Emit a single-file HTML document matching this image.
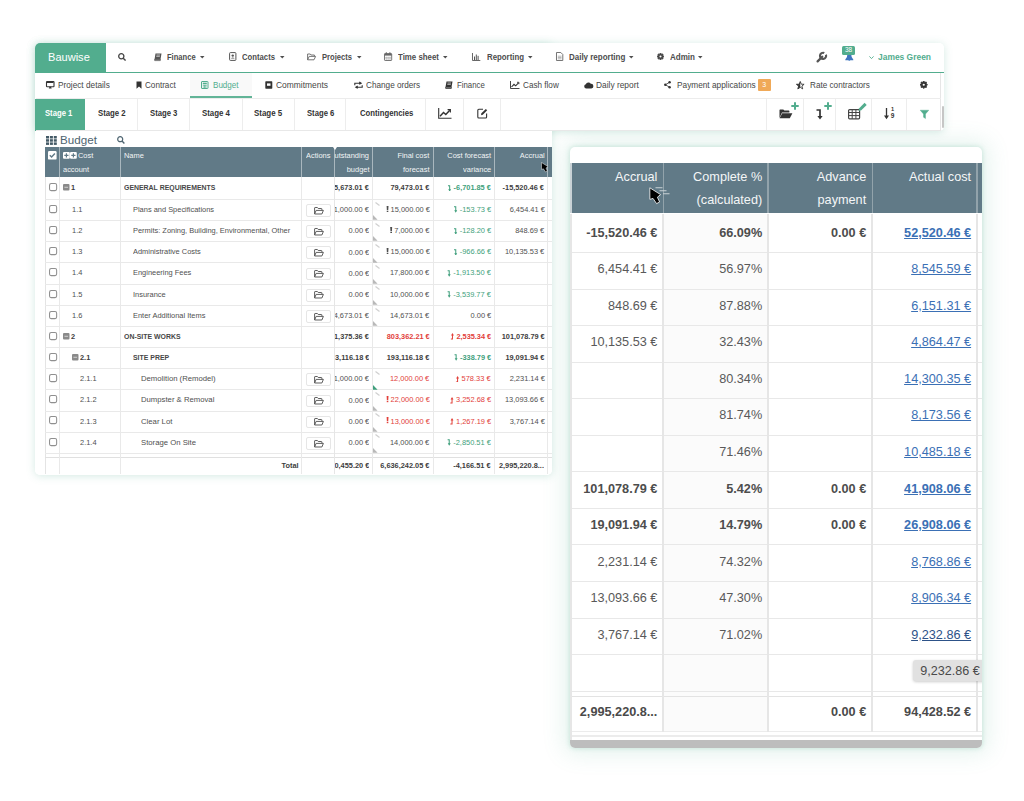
<!DOCTYPE html><html><head><meta charset="utf-8"><style>
html,body{margin:0;padding:0;width:1024px;height:801px;overflow:hidden;background:#fff;font-family:"Liberation Sans", sans-serif;}
body{position:relative;}
</style></head><body>
<div style="position:absolute;left:570.00px;top:147.20px;width:412.40px;height:601.00px;background:#fff;border-radius:5px;box-shadow:0 0 4px 1px rgba(82,173,142,0.2), 0 0 22px 6px rgba(82,173,142,0.15);"></div>
<div style="position:absolute;left:35.00px;top:42.50px;width:909.00px;height:88.00px;background:#fff;border-radius:5px;box-shadow:0 1px 8px rgba(82,173,142,0.25);"></div>
<div style="position:absolute;left:35.00px;top:42.50px;width:517.00px;height:432.00px;background:#fff;border-radius:5px;box-shadow:0 1px 8px rgba(82,173,142,0.25);"></div>
<div style="position:absolute;left:35.00px;top:42.50px;width:909.00px;height:88.00px;background:#fff;border-radius:5px 5px 5px 0;"></div>
<div style="position:absolute;left:35.00px;top:42.50px;width:517.00px;height:432.00px;background:#fff;border-radius:5px 0 5px 5px;"></div>
<div style="position:absolute;left:35.00px;top:42.50px;width:71.00px;height:30.00px;background:#52ad8e;border-top-left-radius:5px;"></div>
<div style="position:absolute;left:35.00px;top:71.80px;width:909.00px;height:1.60px;background:#52ad8e;"></div>
<div style="position:absolute;left:48.20px;top:49.52px;line-height:14.95px;font-size:11.5px;font-weight:400;color:#fff;white-space:nowrap;transform:scaleX(0.9616);transform-origin:left center;">Bauwise</div>
<svg style="position:absolute;left:117.50px;top:52.50px;overflow:visible;" width="8" height="8" viewBox="0 0 8 8"><circle cx="3.3" cy="3.3" r="2.6" fill="none" stroke="#444" stroke-width="1.3"/><line x1="5.2" y1="5.2" x2="7.6" y2="7.6" stroke="#444" stroke-width="1.4"/></svg>
<svg style="position:absolute;left:153.70px;top:52.60px;overflow:visible;" width="8" height="8" viewBox="0 0 8 8"><path d="M1.5 0.5 H7.5 L6.5 6.5 H0.5 Z" fill="#555"/><path d="M0.5 6.5 H6.5 L6.3 7.6 H0.7 Z" fill="none" stroke="#555" stroke-width="0.8"/><line x1="2.5" y1="2" x2="6" y2="2" stroke="#fff" stroke-width="0.6"/><line x1="2.3" y1="3.4" x2="5.8" y2="3.4" stroke="#fff" stroke-width="0.6"/></svg>
<div style="position:absolute;left:167.40px;top:52.28px;line-height:11.44px;font-size:8.8px;font-weight:700;color:#4d4d4d;white-space:nowrap;transform:scaleX(0.8602);transform-origin:left center;">Finance</div>
<svg style="position:absolute;left:200.00px;top:56.00px;overflow:visible;" width="4.5" height="3" viewBox="0 0 4.5 3"><path d="M0 0 L4.5 0 L2.25 2.6 Z" fill="#4d4d4d"/></svg>
<svg style="position:absolute;left:229.20px;top:52.20px;overflow:visible;" width="7.5" height="9" viewBox="0 0 7.5 9"><rect x="0.6" y="0.6" width="6.3" height="7.8" rx="0.8" fill="none" stroke="#555" stroke-width="1"/><circle cx="3.75" cy="3.6" r="1.2" fill="#555"/><path d="M1.9 6.6 Q3.75 4.5 5.6 6.6 Z" fill="#555"/></svg>
<div style="position:absolute;left:242.00px;top:52.28px;line-height:11.44px;font-size:8.8px;font-weight:700;color:#4d4d4d;white-space:nowrap;transform:scaleX(0.8767);transform-origin:left center;">Contacts</div>
<svg style="position:absolute;left:279.60px;top:56.00px;overflow:visible;" width="4.5" height="3" viewBox="0 0 4.5 3"><path d="M0 0 L4.5 0 L2.25 2.6 Z" fill="#4d4d4d"/></svg>
<svg style="position:absolute;left:307.30px;top:53.00px;overflow:visible;" width="9" height="7.5" viewBox="0 0 9 7.5"><path d="M0.6 6.8 V1 H3.2 L4 2 H7.4 V3.2 M0.6 6.8 L2.2 3.4 H8.6 L7 6.8 Z" fill="none" stroke="#666" stroke-width="0.9" stroke-linejoin="round"/></svg>
<div style="position:absolute;left:322.00px;top:52.28px;line-height:11.44px;font-size:8.8px;font-weight:700;color:#4d4d4d;white-space:nowrap;transform:scaleX(0.8641);transform-origin:left center;">Projects</div>
<svg style="position:absolute;left:356.50px;top:56.00px;overflow:visible;" width="4.5" height="3" viewBox="0 0 4.5 3"><path d="M0 0 L4.5 0 L2.25 2.6 Z" fill="#4d4d4d"/></svg>
<svg style="position:absolute;left:384.40px;top:52.20px;overflow:visible;" width="8.2" height="9" viewBox="0 0 8.2 9"><rect x="0.5" y="1.6" width="7.2" height="6.9" rx="0.6" fill="none" stroke="#666" stroke-width="0.9"/><rect x="0.5" y="1.6" width="7.2" height="2" fill="#666"/><line x1="2.3" y1="0.2" x2="2.3" y2="2.4" stroke="#666" stroke-width="1"/><line x1="5.9" y1="0.2" x2="5.9" y2="2.4" stroke="#666" stroke-width="1"/><path d="M2.2 4.6 V8 M4.1 4.6 V8 M6 4.6 V8 M0.8 5.9 H7.4" stroke="#999" stroke-width="0.6"/></svg>
<div style="position:absolute;left:398.00px;top:52.28px;line-height:11.44px;font-size:8.8px;font-weight:700;color:#4d4d4d;white-space:nowrap;transform:scaleX(0.8950);transform-origin:left center;">Time sheet</div>
<svg style="position:absolute;left:443.00px;top:56.00px;overflow:visible;" width="4.5" height="3" viewBox="0 0 4.5 3"><path d="M0 0 L4.5 0 L2.25 2.6 Z" fill="#4d4d4d"/></svg>
<svg style="position:absolute;left:472.30px;top:52.80px;overflow:visible;" width="8.3" height="8" viewBox="0 0 8.3 8"><path d="M0.5 0 V7.5 H8.3" fill="none" stroke="#555" stroke-width="0.9"/><rect x="2" y="3.5" width="1" height="3.5" fill="#555"/><rect x="3.8" y="1.5" width="1" height="5.5" fill="#555"/><rect x="5.6" y="2.8" width="1" height="4.2" fill="#555"/></svg>
<div style="position:absolute;left:487.00px;top:52.28px;line-height:11.44px;font-size:8.8px;font-weight:700;color:#4d4d4d;white-space:nowrap;transform:scaleX(0.8906);transform-origin:left center;">Reporting</div>
<svg style="position:absolute;left:528.00px;top:56.00px;overflow:visible;" width="4.5" height="3" viewBox="0 0 4.5 3"><path d="M0 0 L4.5 0 L2.25 2.6 Z" fill="#4d4d4d"/></svg>
<svg style="position:absolute;left:556.40px;top:52.20px;overflow:visible;" width="7.3" height="9" viewBox="0 0 7.3 9"><path d="M0.5 0.5 H4.8 L6.8 2.5 V8.5 H0.5 Z" fill="none" stroke="#666" stroke-width="0.9"/><path d="M1.8 4.2 H5.5 M1.8 5.5 H5.5 M1.8 6.8 H5.5" stroke="#888" stroke-width="0.6"/></svg>
<div style="position:absolute;left:568.75px;top:52.28px;line-height:11.44px;font-size:8.8px;font-weight:700;color:#4d4d4d;white-space:nowrap;transform:scaleX(0.9061);transform-origin:left center;">Daily reporting</div>
<svg style="position:absolute;left:629.00px;top:56.00px;overflow:visible;" width="4.5" height="3" viewBox="0 0 4.5 3"><path d="M0 0 L4.5 0 L2.25 2.6 Z" fill="#4d4d4d"/></svg>
<svg style="position:absolute;left:657.40px;top:53.20px;overflow:visible;" width="7" height="7" viewBox="0 0 7 7"><polygon points="7.00,3.50 5.83,4.46 5.97,5.97 4.46,5.83 3.50,7.00 2.54,5.83 1.03,5.97 1.17,4.46 0.00,3.50 1.17,2.54 1.03,1.03 2.54,1.17 3.50,0.00 4.46,1.17 5.97,1.03 5.83,2.54" fill="#444" stroke="#444" stroke-width="0.84" stroke-linejoin="round"/><circle cx="3.5" cy="3.5" r="1.05" fill="#fff"/></svg>
<div style="position:absolute;left:670.30px;top:52.28px;line-height:11.44px;font-size:8.8px;font-weight:700;color:#4d4d4d;white-space:nowrap;transform:scaleX(0.9132);transform-origin:left center;">Admin</div>
<svg style="position:absolute;left:698.40px;top:56.00px;overflow:visible;" width="4.5" height="3" viewBox="0 0 4.5 3"><path d="M0 0 L4.5 0 L2.25 2.6 Z" fill="#4d4d4d"/></svg>
<svg style="position:absolute;left:815.50px;top:52.00px;overflow:visible;" width="11" height="11" viewBox="0 0 11 11"><path d="M1.6 9.4 L6.2 4.8" stroke="#555" stroke-width="2.3" stroke-linecap="round"/><path d="M9.9 2.6 A3.1 3.1 0 1 1 8.3 1.0" fill="none" stroke="#555" stroke-width="2.1"/><path d="M8.6 2.3 L10.5 0.4" stroke="#fff" stroke-width="1.5"/></svg>
<svg style="position:absolute;left:844.60px;top:54.20px;overflow:visible;" width="8.6" height="7.6" viewBox="0 0 8.6 7.6"><path d="M2.3 0.5 H6.3 Q6.1 3.8 8.3 5.6 V6.2 H0.3 V5.6 Q2.5 3.8 2.3 0.5 Z" fill="#3f76c0"/><path d="M3.2 6.2 Q4.3 7.8 5.4 6.2 Z" fill="#3f76c0"/></svg>
<div style="position:absolute;left:841.90px;top:45.50px;width:13.00px;height:9.30px;background:#52ad8e;border-radius:1.5px;"></div>
<div style="position:absolute;left:648.40px;width:400px;text-align:center;top:45.98px;line-height:8.45px;font-size:6.5px;font-weight:400;color:#fff;white-space:nowrap;letter-spacing:-0.3px;">38</div>
<svg style="position:absolute;left:868.70px;top:56.00px;overflow:visible;" width="5" height="3.2" viewBox="0 0 5 3.2"><path d="M0.4 0.4 L2.5 2.6 L4.6 0.4" fill="none" stroke="#52ad8e" stroke-width="0.9"/></svg>
<div style="position:absolute;left:878.00px;top:52.28px;line-height:11.44px;font-size:8.8px;font-weight:700;color:#52ad8e;white-space:nowrap;transform:scaleX(0.9590);transform-origin:left center;">James Green</div>
<div style="position:absolute;left:189.70px;top:73.40px;width:62.70px;height:23.60px;background:#f9f9f9;"></div>
<div style="position:absolute;left:189.70px;top:96.40px;width:62.70px;height:1.50px;background:#62b497;"></div>
<div style="position:absolute;left:35.50px;top:97.80px;width:905.00px;height:0.80px;background:#ececec;"></div>
<div style="position:absolute;left:940.40px;top:73.40px;width:0.80px;height:25.00px;background:#e6e6e6;"></div>
<svg style="position:absolute;left:46.00px;top:81.00px;overflow:visible;" width="8.5" height="8" viewBox="0 0 8.5 8"><rect x="0.5" y="0.5" width="7.5" height="5.3" rx="0.6" fill="none" stroke="#333" stroke-width="1.1"/><path d="M2.8 7.6 H5.7 L5 5.8 H3.5 Z" fill="#333"/><rect x="1" y="1" width="6.5" height="1" fill="#333"/></svg>
<div style="position:absolute;left:57.90px;top:79.61px;line-height:11.18px;font-size:8.6px;font-weight:400;color:#464646;white-space:nowrap;transform:scaleX(0.9595);transform-origin:left center;">Project details</div>
<svg style="position:absolute;left:135.50px;top:80.80px;overflow:visible;" width="6" height="8" viewBox="0 0 6 8"><path d="M0.5 0.5 H5.5 V7.8 L3 5.6 L0.5 7.8 Z" fill="#333"/></svg>
<div style="position:absolute;left:144.90px;top:79.61px;line-height:11.18px;font-size:8.6px;font-weight:400;color:#464646;white-space:nowrap;transform:scaleX(0.9451);transform-origin:left center;">Contract</div>
<svg style="position:absolute;left:201.00px;top:80.80px;overflow:visible;" width="7.5" height="8" viewBox="0 0 7.5 8"><rect x="0.5" y="0.5" width="6.5" height="7" rx="0.5" fill="none" stroke="#52ad8e" stroke-width="1"/><rect x="1.8" y="1.7" width="4" height="1.5" fill="#52ad8e"/><path d="M1.8 4.3 H5.8 M1.8 6 H5.8 M3.8 4 V7" stroke="#52ad8e" stroke-width="0.8"/></svg>
<div style="position:absolute;left:213.00px;top:79.61px;line-height:11.18px;font-size:8.6px;font-weight:400;color:#52ad8e;white-space:nowrap;transform:scaleX(0.9394);transform-origin:left center;">Budget</div>
<svg style="position:absolute;left:265.00px;top:80.80px;overflow:visible;" width="7.5" height="8" viewBox="0 0 7.5 8"><rect x="0.3" y="0.3" width="7" height="7.4" rx="0.6" fill="#333"/><rect x="2" y="2.4" width="3.5" height="2.4" fill="#fff"/></svg>
<div style="position:absolute;left:276.00px;top:79.61px;line-height:11.18px;font-size:8.6px;font-weight:400;color:#464646;white-space:nowrap;transform:scaleX(0.9808);transform-origin:left center;">Commitments</div>
<svg style="position:absolute;left:354.00px;top:81.50px;overflow:visible;" width="9" height="6.5" viewBox="0 0 9 6.5"><path d="M0.8 3.2 V1.2 H6.8 M5.3 0 L7.2 1.2 L5.3 2.4" fill="none" stroke="#333" stroke-width="1.1"/><path d="M8.2 3.2 V5.2 H2.2 M3.7 4 L1.8 5.2 L3.7 6.4" fill="none" stroke="#333" stroke-width="1.1"/></svg>
<div style="position:absolute;left:365.80px;top:79.61px;line-height:11.18px;font-size:8.6px;font-weight:400;color:#464646;white-space:nowrap;transform:scaleX(0.9532);transform-origin:left center;">Change orders</div>
<svg style="position:absolute;left:445.00px;top:81.00px;overflow:visible;" width="8" height="8" viewBox="0 0 8 8"><path d="M1.5 0.5 H7.5 L6.5 6.3 H0.5 Z" fill="#333"/><path d="M0.5 6.3 H6.5 L6.3 7.5 H0.7 Z" fill="none" stroke="#333" stroke-width="0.8"/><line x1="2.5" y1="2" x2="6" y2="2" stroke="#fff" stroke-width="0.6"/><line x1="2.3" y1="3.4" x2="5.8" y2="3.4" stroke="#fff" stroke-width="0.6"/></svg>
<div style="position:absolute;left:456.60px;top:79.61px;line-height:11.18px;font-size:8.6px;font-weight:400;color:#464646;white-space:nowrap;transform:scaleX(0.9091);transform-origin:left center;">Finance</div>
<svg style="position:absolute;left:510.00px;top:81.00px;overflow:visible;" width="9.5" height="8" viewBox="0 0 9.5 8"><path d="M0.5 0 V7.5 H9.5" fill="none" stroke="#333" stroke-width="0.9"/><path d="M1.5 6 L4 3.3 L5.7 4.8 L8.5 1.8" fill="none" stroke="#333" stroke-width="1.1"/><path d="M7 1.3 H8.9 V3.2" fill="none" stroke="#333" stroke-width="0.9"/></svg>
<div style="position:absolute;left:522.50px;top:79.61px;line-height:11.18px;font-size:8.6px;font-weight:400;color:#464646;white-space:nowrap;transform:scaleX(0.9487);transform-origin:left center;">Cash flow</div>
<svg style="position:absolute;left:583.50px;top:81.50px;overflow:visible;" width="9.5" height="7" viewBox="0 0 9.5 7"><path d="M2.2 6.5 A2.2 2.2 0 0 1 1.8 2.2 A2.8 2.8 0 0 1 6.8 1.8 A2.3 2.3 0 0 1 7.3 6.5 Z" fill="#333"/></svg>
<div style="position:absolute;left:595.80px;top:79.61px;line-height:11.18px;font-size:8.6px;font-weight:400;color:#464646;white-space:nowrap;transform:scaleX(0.9738);transform-origin:left center;">Daily report</div>
<svg style="position:absolute;left:664.40px;top:81.20px;overflow:visible;" width="6.8" height="7.5" viewBox="0 0 6.8 7.5"><circle cx="5.6" cy="1.3" r="1.2" fill="#333"/><circle cx="1.3" cy="3.75" r="1.2" fill="#333"/><circle cx="5.6" cy="6.2" r="1.2" fill="#333"/><path d="M5.6 1.3 L1.3 3.75 L5.6 6.2" fill="none" stroke="#333" stroke-width="0.8"/></svg>
<div style="position:absolute;left:676.80px;top:79.61px;line-height:11.18px;font-size:8.6px;font-weight:400;color:#464646;white-space:nowrap;transform:scaleX(0.9634);transform-origin:left center;">Payment applications</div>
<div style="position:absolute;left:757.60px;top:78.80px;width:13.00px;height:12.00px;background:#f0a958;border-radius:1px;"></div>
<div style="position:absolute;left:564.10px;width:400px;text-align:center;top:80.25px;line-height:9.1px;font-size:7px;font-weight:400;color:#fff;white-space:nowrap;">3</div>
<svg style="position:absolute;left:796.40px;top:80.50px;overflow:visible;" width="8.5" height="8.5" viewBox="0 0 8.5 8.5"><path d="M4.25 0.5 L5.3 3.2 L8.1 3.3 L5.9 5.1 L6.7 7.9 L4.25 6.3 L1.8 7.9 L2.6 5.1 L0.4 3.3 L3.2 3.2 Z" fill="none" stroke="#333" stroke-width="0.9" stroke-linejoin="round"/><path d="M4.25 0.5 L3.2 3.2 L0.4 3.3 L2.6 5.1 L1.8 7.9 L4.25 6.3 Z" fill="#333"/></svg>
<div style="position:absolute;left:809.70px;top:79.61px;line-height:11.18px;font-size:8.6px;font-weight:400;color:#464646;white-space:nowrap;transform:scaleX(0.9499);transform-origin:left center;">Rate contractors</div>
<svg style="position:absolute;left:919.80px;top:81.20px;overflow:visible;" width="7.5" height="7.5" viewBox="0 0 7.5 7.5"><polygon points="7.50,3.75 6.24,4.78 6.40,6.40 4.78,6.24 3.75,7.50 2.72,6.24 1.10,6.40 1.26,4.78 0.00,3.75 1.26,2.72 1.10,1.10 2.72,1.26 3.75,0.00 4.78,1.26 6.40,1.10 6.24,2.72" fill="#333" stroke="#333" stroke-width="0.90" stroke-linejoin="round"/><circle cx="3.75" cy="3.75" r="1.12" fill="#fff"/></svg>
<div style="position:absolute;left:35.00px;top:98.50px;width:50.00px;height:32.00px;background:#52ad8e;"></div>
<div style="position:absolute;left:35.50px;top:130.20px;width:905.00px;height:0.90px;background:#e8e8e8;"></div>
<div style="position:absolute;left:137.00px;top:98.60px;width:1.00px;height:31.60px;background:#ededed;"></div>
<div style="position:absolute;left:189.00px;top:98.60px;width:1.00px;height:31.60px;background:#ededed;"></div>
<div style="position:absolute;left:242.00px;top:98.60px;width:1.00px;height:31.60px;background:#ededed;"></div>
<div style="position:absolute;left:294.00px;top:98.60px;width:1.00px;height:31.60px;background:#ededed;"></div>
<div style="position:absolute;left:345.00px;top:98.60px;width:1.00px;height:31.60px;background:#ededed;"></div>
<div style="position:absolute;left:425.00px;top:98.60px;width:1.00px;height:31.60px;background:#ededed;"></div>
<div style="position:absolute;left:463.00px;top:98.60px;width:1.00px;height:31.60px;background:#ededed;"></div>
<div style="position:absolute;left:500.00px;top:98.60px;width:1.00px;height:31.60px;background:#ededed;"></div>
<div style="position:absolute;left:766.00px;top:98.60px;width:1.00px;height:31.60px;background:#ededed;"></div>
<div style="position:absolute;left:803.00px;top:98.60px;width:1.00px;height:31.60px;background:#ededed;"></div>
<div style="position:absolute;left:835.00px;top:98.60px;width:1.00px;height:31.60px;background:#ededed;"></div>
<div style="position:absolute;left:871.00px;top:98.60px;width:1.00px;height:31.60px;background:#ededed;"></div>
<div style="position:absolute;left:906.00px;top:98.60px;width:1.00px;height:31.60px;background:#ededed;"></div>
<div style="position:absolute;left:940.40px;top:98.60px;width:0.80px;height:31.60px;background:#e6e6e6;"></div>
<div style="position:absolute;left:942.20px;top:106.00px;width:2.20px;height:22.00px;background:#c6c6c6;border-radius:1px;"></div>
<div style="position:absolute;left:45.00px;top:108.41px;line-height:11.18px;font-size:8.6px;font-weight:700;color:#fff;white-space:nowrap;transform:scaleX(0.8928);transform-origin:left center;">Stage 1</div>
<div style="position:absolute;left:97.60px;top:108.41px;line-height:11.18px;font-size:8.6px;font-weight:700;color:#333;white-space:nowrap;transform:scaleX(0.9059);transform-origin:left center;">Stage 2</div>
<div style="position:absolute;left:149.90px;top:108.41px;line-height:11.18px;font-size:8.6px;font-weight:700;color:#333;white-space:nowrap;transform:scaleX(0.8961);transform-origin:left center;">Stage 3</div>
<div style="position:absolute;left:202.00px;top:108.41px;line-height:11.18px;font-size:8.6px;font-weight:700;color:#333;white-space:nowrap;transform:scaleX(0.9157);transform-origin:left center;">Stage 4</div>
<div style="position:absolute;left:254.20px;top:108.41px;line-height:11.18px;font-size:8.6px;font-weight:700;color:#333;white-space:nowrap;transform:scaleX(0.9222);transform-origin:left center;">Stage 5</div>
<div style="position:absolute;left:307.00px;top:108.41px;line-height:11.18px;font-size:8.6px;font-weight:700;color:#333;white-space:nowrap;transform:scaleX(0.8928);transform-origin:left center;">Stage 6</div>
<div style="position:absolute;left:359.50px;top:108.41px;line-height:11.18px;font-size:8.6px;font-weight:700;color:#333;white-space:nowrap;transform:scaleX(0.9001);transform-origin:left center;">Contingencies</div>
<svg style="position:absolute;left:438.00px;top:108.00px;overflow:visible;" width="13.5" height="11" viewBox="0 0 13.5 11"><path d="M0.7 0 V10.3 H13.5" fill="none" stroke="#333" stroke-width="1.1"/><path d="M2 8.2 L5.5 4.5 L7.8 6.5 L11.8 2.2" fill="none" stroke="#333" stroke-width="1.5"/><path d="M9.6 1.6 H12.4 V4.4" fill="none" stroke="#333" stroke-width="1.1"/></svg>
<svg style="position:absolute;left:476.50px;top:107.50px;overflow:visible;" width="11" height="11" viewBox="0 0 11 11"><path d="M6 1.2 H1.8 Q0.8 1.2 0.8 2.2 V9 Q0.8 10 1.8 10 H8.6 Q9.6 10 9.6 9 V5.5" fill="none" stroke="#333" stroke-width="1.1"/><path d="M4 7.2 L4.4 5.3 L8.8 0.9 L10.2 2.3 L5.8 6.7 Z" fill="#333"/></svg>
<svg style="position:absolute;left:779.00px;top:109.00px;overflow:visible;" width="14" height="9.5" viewBox="0 0 14 9.5"><path d="M0.5 9 V1 Q0.5 0.4 1.1 0.4 H4.3 L5.4 1.6 H9.8 Q10.4 1.6 10.4 2.2 V3.6 H3 L0.5 9 Z" fill="#333"/><path d="M0.6 9.2 L3.2 4.3 H13.4 L10.8 9.2 Z" fill="#333"/></svg>
<svg style="position:absolute;left:791.00px;top:102.00px;overflow:visible;" width="8" height="8" viewBox="0 0 8 8"><path d="M4 0.3 V7.7 M0.3 4 H7.7" stroke="#52ad8e" stroke-width="2"/></svg>
<svg style="position:absolute;left:816.00px;top:108.50px;overflow:visible;" width="8" height="10.5" viewBox="0 0 8 10.5"><path d="M0.5 1 H4 V8.5" fill="none" stroke="#333" stroke-width="1.7"/><path d="M1.4 7 L4 10.4 L6.6 7 Z" fill="#333"/></svg>
<svg style="position:absolute;left:823.50px;top:101.80px;overflow:visible;" width="8" height="8" viewBox="0 0 8 8"><path d="M4 0.3 V7.7 M0.3 4 H7.7" stroke="#52ad8e" stroke-width="2"/></svg>
<svg style="position:absolute;left:847.50px;top:108.50px;overflow:visible;" width="12.5" height="10.5" viewBox="0 0 12.5 10.5"><rect x="0.6" y="0.6" width="11" height="9.2" rx="1" fill="none" stroke="#444" stroke-width="1.2"/><path d="M0.6 3.5 H11.6 M0.6 6.6 H11.6 M4.2 0.6 V9.8 M7.9 0.6 V9.8" stroke="#444" stroke-width="1"/></svg>
<svg style="position:absolute;left:857.50px;top:101.50px;overflow:visible;" width="9.5" height="9.5" viewBox="0 0 9.5 9.5"><path d="M0.6 8.9 L1.2 6.2 L6.6 0.8 L8.7 2.9 L3.3 8.3 Z" fill="#52ad8e"/></svg>
<svg style="position:absolute;left:883.50px;top:107.80px;overflow:visible;" width="5" height="11.5" viewBox="0 0 5 11.5"><path d="M2.5 0 V9.5" stroke="#333" stroke-width="1.3"/><path d="M0 7.5 L2.5 11.2 L5 7.5 Z" fill="#333"/></svg>
<div style="position:absolute;left:692.60px;width:400px;text-align:center;top:105.66px;line-height:7.28px;font-size:5.6px;font-weight:700;color:#333;white-space:nowrap;">1</div>
<div style="position:absolute;left:692.60px;width:400px;text-align:center;top:111.98px;line-height:8.45px;font-size:6.5px;font-weight:700;color:#333;white-space:nowrap;">9</div>
<svg style="position:absolute;left:919.50px;top:109.50px;overflow:visible;" width="9" height="8.8" viewBox="0 0 9 8.8"><path d="M0.2 0.2 H8.8 L5.5 4 V8.6 L3.5 7.2 V4 Z" fill="#52ad8e" stroke="#52ad8e" stroke-width="0.4" stroke-linejoin="round"/></svg>
<svg style="position:absolute;left:46.00px;top:135.50px;overflow:visible;" width="11" height="9" viewBox="0 0 11 9"><g fill="#445a66"><rect x="0.0" y="0.0" width="3" height="2.5"/><rect x="0.0" y="3.2" width="3" height="2.5"/><rect x="0.0" y="6.4" width="3" height="2.5"/><rect x="3.9" y="0.0" width="3" height="2.5"/><rect x="3.9" y="3.2" width="3" height="2.5"/><rect x="3.9" y="6.4" width="3" height="2.5"/><rect x="7.8" y="0.0" width="3" height="2.5"/><rect x="7.8" y="3.2" width="3" height="2.5"/><rect x="7.8" y="6.4" width="3" height="2.5"/></g></svg>
<div style="position:absolute;left:60.00px;top:132.26px;line-height:15.08px;font-size:11.6px;font-weight:400;color:#4d6470;white-space:nowrap;letter-spacing:0.05px;">Budget</div>
<svg style="position:absolute;left:117.00px;top:136.00px;overflow:visible;" width="8" height="8" viewBox="0 0 8 8"><circle cx="3.2" cy="3.2" r="2.5" fill="none" stroke="#4d6470" stroke-width="1.2"/><line x1="5" y1="5" x2="7.4" y2="7.4" stroke="#4d6470" stroke-width="1.4"/></svg>
<div style="position:absolute;left:45.30px;top:147.00px;width:506.70px;height:29.80px;background:#617a87;"></div>
<div style="position:absolute;left:58.90px;top:147.00px;width:1.00px;height:29.80px;background:#a9b7be;"></div>
<div style="position:absolute;left:119.90px;top:147.00px;width:1.00px;height:29.80px;background:#a9b7be;"></div>
<div style="position:absolute;left:301.10px;top:147.00px;width:1.00px;height:29.80px;background:#a9b7be;"></div>
<div style="position:absolute;left:334.20px;top:147.00px;width:1.00px;height:29.80px;background:#a9b7be;"></div>
<div style="position:absolute;left:372.10px;top:147.00px;width:1.00px;height:29.80px;background:#a9b7be;"></div>
<div style="position:absolute;left:432.90px;top:147.00px;width:1.00px;height:29.80px;background:#a9b7be;"></div>
<div style="position:absolute;left:493.90px;top:147.00px;width:1.00px;height:29.80px;background:#a9b7be;"></div>
<div style="position:absolute;left:547.00px;top:147.00px;width:1.00px;height:29.80px;background:#a9b7be;"></div>
<div style="position:absolute;left:44.70px;top:176.80px;width:0.90px;height:297.70px;background:#e4e4e4;"></div>
<div style="position:absolute;left:45.30px;top:199.00px;width:506.70px;height:1.00px;background:#e9e9e9;"></div>
<div style="position:absolute;left:45.30px;top:220.00px;width:506.70px;height:1.00px;background:#e9e9e9;"></div>
<div style="position:absolute;left:45.30px;top:241.00px;width:506.70px;height:1.00px;background:#e9e9e9;"></div>
<div style="position:absolute;left:45.30px;top:262.00px;width:506.70px;height:1.00px;background:#e9e9e9;"></div>
<div style="position:absolute;left:45.30px;top:284.00px;width:506.70px;height:1.00px;background:#e9e9e9;"></div>
<div style="position:absolute;left:45.30px;top:305.00px;width:506.70px;height:1.00px;background:#e9e9e9;"></div>
<div style="position:absolute;left:45.30px;top:326.00px;width:506.70px;height:1.00px;background:#e9e9e9;"></div>
<div style="position:absolute;left:45.30px;top:347.00px;width:506.70px;height:1.00px;background:#e9e9e9;"></div>
<div style="position:absolute;left:45.30px;top:368.00px;width:506.70px;height:1.00px;background:#e9e9e9;"></div>
<div style="position:absolute;left:45.30px;top:389.00px;width:506.70px;height:1.00px;background:#e9e9e9;"></div>
<div style="position:absolute;left:45.30px;top:411.00px;width:506.70px;height:1.00px;background:#e9e9e9;"></div>
<div style="position:absolute;left:45.30px;top:432.00px;width:506.70px;height:1.00px;background:#e9e9e9;"></div>
<div style="position:absolute;left:45.30px;top:453.00px;width:506.70px;height:1.00px;background:#e9e9e9;"></div>
<div style="position:absolute;left:45.30px;top:456.80px;width:506.70px;height:1.00px;background:#e0e0e0;"></div>
<div style="position:absolute;left:59.00px;top:176.80px;width:1.00px;height:297.70px;background:#e9e9e9;"></div>
<div style="position:absolute;left:120.00px;top:176.80px;width:1.00px;height:297.70px;background:#e9e9e9;"></div>
<div style="position:absolute;left:301.00px;top:176.80px;width:1.00px;height:297.70px;background:#e9e9e9;"></div>
<div style="position:absolute;left:372.00px;top:176.80px;width:1.00px;height:297.70px;background:#e9e9e9;"></div>
<div style="position:absolute;left:433.00px;top:176.80px;width:1.00px;height:297.70px;background:#e9e9e9;"></div>
<div style="position:absolute;left:494.00px;top:176.80px;width:1.00px;height:297.70px;background:#e9e9e9;"></div>
<div style="position:absolute;left:547.00px;top:176.80px;width:1.00px;height:297.70px;background:#e9e9e9;"></div>
<div style="position:absolute;left:334.00px;top:176.80px;width:1.40px;height:297.70px;background:#e6e6e6;"></div>
<svg style="position:absolute;left:48.20px;top:151.10px;overflow:visible;" width="8.4" height="8.4" viewBox="0 0 8.4 8.4"><rect x="0" y="0" width="8.6" height="8.6" rx="1.2" fill="#fff"/><path d="M1.8 4.3 L3.6 6.1 L6.9 2.5" fill="none" stroke="#617a87" stroke-width="1.4"/></svg>
<svg style="position:absolute;left:62.80px;top:152.00px;overflow:visible;" width="6.8" height="6.8" viewBox="0 0 6.8 6.8"><rect x="0" y="0" width="6.8" height="6.8" rx="1" fill="#fff"/><path d="M3.4 1.3 V5.5 M1.3 3.4 H5.5" stroke="#617a87" stroke-width="1.2"/></svg>
<svg style="position:absolute;left:69.90px;top:152.00px;overflow:visible;" width="6.8" height="6.8" viewBox="0 0 6.8 6.8"><rect x="0" y="0" width="6.8" height="6.8" rx="1" fill="#fff"/><path d="M3.4 1.3 V5.5 M1.3 3.4 H5.5" stroke="#617a87" stroke-width="1.2"/></svg>
<div style="position:absolute;left:78.30px;top:151.10px;line-height:10.4px;font-size:8.0px;font-weight:400;color:#f2f5f6;white-space:nowrap;transform:scaleX(0.93);transform-origin:left center;">Cost</div>
<div style="position:absolute;left:62.80px;top:165.40px;line-height:10.4px;font-size:8.0px;font-weight:400;color:#f2f5f6;white-space:nowrap;transform:scaleX(0.93);transform-origin:left center;">account</div>
<div style="position:absolute;left:123.80px;top:151.10px;line-height:10.4px;font-size:8.0px;font-weight:400;color:#f2f5f6;white-space:nowrap;transform:scaleX(0.93);transform-origin:left center;">Name</div>
<div style="position:absolute;left:305.80px;top:151.10px;line-height:10.4px;font-size:8.0px;font-weight:400;color:#f2f5f6;white-space:nowrap;transform:scaleX(0.93);transform-origin:left center;">Actions</div>
<div style="position:absolute;right:654.90px;top:151.10px;line-height:10.4px;font-size:8.0px;font-weight:400;color:#f2f5f6;white-space:nowrap;transform:scaleX(0.93);transform-origin:right center;">utstanding</div>
<div style="position:absolute;right:654.90px;top:165.40px;line-height:10.4px;font-size:8.0px;font-weight:400;color:#f2f5f6;white-space:nowrap;transform:scaleX(0.93);transform-origin:right center;">budget</div>
<div style="position:absolute;right:594.30px;top:151.10px;line-height:10.4px;font-size:8.0px;font-weight:400;color:#f2f5f6;white-space:nowrap;transform:scaleX(0.93);transform-origin:right center;">Final cost</div>
<div style="position:absolute;right:594.30px;top:165.40px;line-height:10.4px;font-size:8.0px;font-weight:400;color:#f2f5f6;white-space:nowrap;transform:scaleX(0.93);transform-origin:right center;">forecast</div>
<div style="position:absolute;right:533.10px;top:151.10px;line-height:10.4px;font-size:8.0px;font-weight:400;color:#f2f5f6;white-space:nowrap;transform:scaleX(0.93);transform-origin:right center;">Cost forecast</div>
<div style="position:absolute;right:533.10px;top:165.40px;line-height:10.4px;font-size:8.0px;font-weight:400;color:#f2f5f6;white-space:nowrap;transform:scaleX(0.93);transform-origin:right center;">variance</div>
<div style="position:absolute;right:479.60px;top:151.10px;line-height:10.4px;font-size:8.0px;font-weight:400;color:#f2f5f6;white-space:nowrap;transform:scaleX(0.93);transform-origin:right center;">Accrual</div>
<svg style="position:absolute;left:332.80px;top:147.00px;overflow:visible;" width="4" height="3" viewBox="0 0 4 3"><path d="M0 0 H4 L2 3 Z" fill="#fff"/></svg>
<svg style="position:absolute;left:49.20px;top:183.05px;overflow:visible;" width="8.2" height="8.2" viewBox="0 0 8.2 8.2"><rect x="0.55" y="0.55" width="7.1" height="7.1" rx="1.6" fill="#fff" stroke="#8f8f8f" stroke-width="1.05"/></svg>
<svg style="position:absolute;left:63.40px;top:184.15px;overflow:visible;" width="6.5" height="6.4" viewBox="0 0 6.5 6.4"><rect x="0" y="0" width="6.5" height="6.4" rx="1" fill="#8a8a8a"/><rect x="1.4" y="2.8" width="3.7" height="0.9" fill="#d8d8d8"/></svg>
<div style="position:absolute;left:71.00px;top:183.15px;line-height:10.4px;font-size:8.0px;font-weight:700;color:#3d3d3d;white-space:nowrap;transform:scaleX(0.92);transform-origin:left center;">1</div>
<div style="position:absolute;left:124.30px;top:183.28px;line-height:10.14px;font-size:7.8px;font-weight:700;color:#474747;white-space:nowrap;transform:scaleX(0.888);transform-origin:left center;">GENERAL REQUIREMENTS</div>
<div style="position:absolute;left:335.4px;top:182.35px;width:33.70px;height:12px;overflow:hidden;"><div style="position:absolute;right:0;top:0;line-height:12px;font-size:8.0px;font-weight:700;color:#3d3d3d;white-space:nowrap;transform:scaleX(0.92);transform-origin:right center;">5,673.01 €</div></div>
<div style="position:absolute;right:594.30px;top:183.15px;line-height:10.4px;font-size:8.0px;font-weight:700;color:#3d3d3d;white-space:nowrap;transform:scaleX(0.92);transform-origin:right center;">79,473.01 €</div>
<div style="position:absolute;right:533.10px;top:183.15px;line-height:10.4px;font-size:8.0px;font-weight:700;color:#3f9f7c;white-space:nowrap;transform:scaleX(0.92);transform-origin:right center;"><svg width="4.2" height="6.8" viewBox="0 0 4.2 6.8" style="vertical-align:-1.2px;margin-right:2.2px"><path d="M0.2 0.8 H2.1 V5" fill="none" stroke="#3f9f7c" stroke-width="1.1"/><path d="M0.5 4.2 L2.1 6.7 L3.7 4.2 Z" fill="#3f9f7c"/></svg>-6,701.85 €</div>
<div style="position:absolute;right:479.60px;top:183.15px;line-height:10.4px;font-size:8.0px;font-weight:700;color:#3d3d3d;white-space:nowrap;transform:scaleX(0.92);transform-origin:right center;">-15,520.46 €</div>
<svg style="position:absolute;left:49.20px;top:204.88px;overflow:visible;" width="8.2" height="8.2" viewBox="0 0 8.2 8.2"><rect x="0.55" y="0.55" width="7.1" height="7.1" rx="1.6" fill="#fff" stroke="#8f8f8f" stroke-width="1.05"/></svg>
<div style="position:absolute;left:72.00px;top:204.98px;line-height:10.4px;font-size:8.0px;font-weight:400;color:#4f4f4f;white-space:nowrap;transform:scaleX(0.93);transform-origin:left center;">1.1</div>
<div style="position:absolute;left:132.60px;top:204.98px;line-height:10.4px;font-size:8.0px;font-weight:400;color:#4f4f4f;white-space:nowrap;transform:scaleX(0.93);transform-origin:left center;">Plans and Specifications</div>
<div style="position:absolute;left:306.40px;top:204.08px;width:24.60px;height:12.80px;background:#fff;border:0.8px solid #e6e6e6;border-radius:2px;box-sizing:border-box;"></div>
<svg style="position:absolute;left:313.50px;top:206.78px;overflow:visible;" width="10" height="7.8" viewBox="0 0 10 7.8"><path d="M0.6 7 V1 Q0.6 0.5 1.1 0.5 H3.4 L4.2 1.5 H7.4 Q7.9 1.5 7.9 2 V3.2 M0.6 7 L2.1 3.4 H9.4 L7.9 7 Z" fill="none" stroke="#555" stroke-width="0.95" stroke-linejoin="round"/></svg>
<div style="position:absolute;left:335.4px;top:204.18px;width:33.70px;height:12px;overflow:hidden;"><div style="position:absolute;right:0;top:0;line-height:12px;font-size:8.0px;font-weight:400;color:#4f4f4f;white-space:nowrap;transform:scaleX(0.93);transform-origin:right center;">1,000.00 €</div></div>
<svg style="position:absolute;left:374.50px;top:201.70px;overflow:visible;" width="5" height="4" viewBox="0 0 5 4"><path d="M0.5 0.5 L4.5 3.5" stroke="#d0d0d0" stroke-width="1.3"/></svg>
<svg style="position:absolute;left:373.20px;top:215.26px;overflow:visible;" width="5" height="5" viewBox="0 0 5 5"><path d="M0 0 L4.6 4.8 H0 Z" fill="#b8b8b8"/></svg>
<div style="position:absolute;right:594.30px;top:204.98px;line-height:10.4px;font-size:8.0px;font-weight:400;color:#4f4f4f;white-space:nowrap;transform:scaleX(0.93);transform-origin:right center;"><svg width="2.6" height="6.2" viewBox="0 0 2.6 6.2" style="vertical-align:-0.1px;margin-right:2.0px"><path d="M0.2 0 H2.4 L2.1 4.1 H0.5 Z" fill="#4f4f4f"/><rect x="0.4" y="4.7" width="1.8" height="1.5" fill="#4f4f4f"/></svg>15,000.00 €</div>
<div style="position:absolute;right:533.10px;top:204.98px;line-height:10.4px;font-size:8.0px;font-weight:400;color:#3f9f7c;white-space:nowrap;transform:scaleX(0.93);transform-origin:right center;"><svg width="4.2" height="6.8" viewBox="0 0 4.2 6.8" style="vertical-align:-1.2px;margin-right:2.2px"><path d="M0.2 0.8 H2.1 V5" fill="none" stroke="#3f9f7c" stroke-width="1.1"/><path d="M0.5 4.2 L2.1 6.7 L3.7 4.2 Z" fill="#3f9f7c"/></svg>-153.73 €</div>
<div style="position:absolute;right:479.60px;top:204.98px;line-height:10.4px;font-size:8.0px;font-weight:400;color:#4f4f4f;white-space:nowrap;transform:scaleX(0.93);transform-origin:right center;">6,454.41 €</div>
<svg style="position:absolute;left:49.20px;top:226.04px;overflow:visible;" width="8.2" height="8.2" viewBox="0 0 8.2 8.2"><rect x="0.55" y="0.55" width="7.1" height="7.1" rx="1.6" fill="#fff" stroke="#8f8f8f" stroke-width="1.05"/></svg>
<div style="position:absolute;left:72.00px;top:226.14px;line-height:10.4px;font-size:8.0px;font-weight:400;color:#4f4f4f;white-space:nowrap;transform:scaleX(0.93);transform-origin:left center;">1.2</div>
<div style="position:absolute;left:132.60px;top:226.14px;line-height:10.4px;font-size:8.0px;font-weight:400;color:#4f4f4f;white-space:nowrap;transform:scaleX(0.93);transform-origin:left center;">Permits: Zoning, Building, Environmental, Other</div>
<div style="position:absolute;left:306.40px;top:225.24px;width:24.60px;height:12.80px;background:#fff;border:0.8px solid #e6e6e6;border-radius:2px;box-sizing:border-box;"></div>
<svg style="position:absolute;left:313.50px;top:227.94px;overflow:visible;" width="10" height="7.8" viewBox="0 0 10 7.8"><path d="M0.6 7 V1 Q0.6 0.5 1.1 0.5 H3.4 L4.2 1.5 H7.4 Q7.9 1.5 7.9 2 V3.2 M0.6 7 L2.1 3.4 H9.4 L7.9 7 Z" fill="none" stroke="#555" stroke-width="0.95" stroke-linejoin="round"/></svg>
<div style="position:absolute;left:335.4px;top:225.34px;width:33.70px;height:12px;overflow:hidden;"><div style="position:absolute;right:0;top:0;line-height:12px;font-size:8.0px;font-weight:400;color:#4f4f4f;white-space:nowrap;transform:scaleX(0.93);transform-origin:right center;">0.00 €</div></div>
<svg style="position:absolute;left:374.50px;top:222.86px;overflow:visible;" width="5" height="4" viewBox="0 0 5 4"><path d="M0.5 0.5 L4.5 3.5" stroke="#d0d0d0" stroke-width="1.3"/></svg>
<svg style="position:absolute;left:373.20px;top:236.42px;overflow:visible;" width="5" height="5" viewBox="0 0 5 5"><path d="M0 0 L4.6 4.8 H0 Z" fill="#b8b8b8"/></svg>
<div style="position:absolute;right:594.30px;top:226.14px;line-height:10.4px;font-size:8.0px;font-weight:400;color:#4f4f4f;white-space:nowrap;transform:scaleX(0.93);transform-origin:right center;"><svg width="2.6" height="6.2" viewBox="0 0 2.6 6.2" style="vertical-align:-0.1px;margin-right:2.0px"><path d="M0.2 0 H2.4 L2.1 4.1 H0.5 Z" fill="#4f4f4f"/><rect x="0.4" y="4.7" width="1.8" height="1.5" fill="#4f4f4f"/></svg>7,000.00 €</div>
<div style="position:absolute;right:533.10px;top:226.14px;line-height:10.4px;font-size:8.0px;font-weight:400;color:#3f9f7c;white-space:nowrap;transform:scaleX(0.93);transform-origin:right center;"><svg width="4.2" height="6.8" viewBox="0 0 4.2 6.8" style="vertical-align:-1.2px;margin-right:2.2px"><path d="M0.2 0.8 H2.1 V5" fill="none" stroke="#3f9f7c" stroke-width="1.1"/><path d="M0.5 4.2 L2.1 6.7 L3.7 4.2 Z" fill="#3f9f7c"/></svg>-128.20 €</div>
<div style="position:absolute;right:479.60px;top:226.14px;line-height:10.4px;font-size:8.0px;font-weight:400;color:#4f4f4f;white-space:nowrap;transform:scaleX(0.93);transform-origin:right center;">848.69 €</div>
<svg style="position:absolute;left:49.20px;top:247.20px;overflow:visible;" width="8.2" height="8.2" viewBox="0 0 8.2 8.2"><rect x="0.55" y="0.55" width="7.1" height="7.1" rx="1.6" fill="#fff" stroke="#8f8f8f" stroke-width="1.05"/></svg>
<div style="position:absolute;left:72.00px;top:247.30px;line-height:10.4px;font-size:8.0px;font-weight:400;color:#4f4f4f;white-space:nowrap;transform:scaleX(0.93);transform-origin:left center;">1.3</div>
<div style="position:absolute;left:132.60px;top:247.30px;line-height:10.4px;font-size:8.0px;font-weight:400;color:#4f4f4f;white-space:nowrap;transform:scaleX(0.93);transform-origin:left center;">Administrative Costs</div>
<div style="position:absolute;left:306.40px;top:246.40px;width:24.60px;height:12.80px;background:#fff;border:0.8px solid #e6e6e6;border-radius:2px;box-sizing:border-box;"></div>
<svg style="position:absolute;left:313.50px;top:249.10px;overflow:visible;" width="10" height="7.8" viewBox="0 0 10 7.8"><path d="M0.6 7 V1 Q0.6 0.5 1.1 0.5 H3.4 L4.2 1.5 H7.4 Q7.9 1.5 7.9 2 V3.2 M0.6 7 L2.1 3.4 H9.4 L7.9 7 Z" fill="none" stroke="#555" stroke-width="0.95" stroke-linejoin="round"/></svg>
<div style="position:absolute;left:335.4px;top:246.50px;width:33.70px;height:12px;overflow:hidden;"><div style="position:absolute;right:0;top:0;line-height:12px;font-size:8.0px;font-weight:400;color:#4f4f4f;white-space:nowrap;transform:scaleX(0.93);transform-origin:right center;">0.00 €</div></div>
<svg style="position:absolute;left:374.50px;top:244.02px;overflow:visible;" width="5" height="4" viewBox="0 0 5 4"><path d="M0.5 0.5 L4.5 3.5" stroke="#d0d0d0" stroke-width="1.3"/></svg>
<svg style="position:absolute;left:373.20px;top:257.58px;overflow:visible;" width="5" height="5" viewBox="0 0 5 5"><path d="M0 0 L4.6 4.8 H0 Z" fill="#b8b8b8"/></svg>
<div style="position:absolute;right:594.30px;top:247.30px;line-height:10.4px;font-size:8.0px;font-weight:400;color:#4f4f4f;white-space:nowrap;transform:scaleX(0.93);transform-origin:right center;"><svg width="2.6" height="6.2" viewBox="0 0 2.6 6.2" style="vertical-align:-0.1px;margin-right:2.0px"><path d="M0.2 0 H2.4 L2.1 4.1 H0.5 Z" fill="#4f4f4f"/><rect x="0.4" y="4.7" width="1.8" height="1.5" fill="#4f4f4f"/></svg>15,000.00 €</div>
<div style="position:absolute;right:533.10px;top:247.30px;line-height:10.4px;font-size:8.0px;font-weight:400;color:#3f9f7c;white-space:nowrap;transform:scaleX(0.93);transform-origin:right center;"><svg width="4.2" height="6.8" viewBox="0 0 4.2 6.8" style="vertical-align:-1.2px;margin-right:2.2px"><path d="M0.2 0.8 H2.1 V5" fill="none" stroke="#3f9f7c" stroke-width="1.1"/><path d="M0.5 4.2 L2.1 6.7 L3.7 4.2 Z" fill="#3f9f7c"/></svg>-966.66 €</div>
<div style="position:absolute;right:479.60px;top:247.30px;line-height:10.4px;font-size:8.0px;font-weight:400;color:#4f4f4f;white-space:nowrap;transform:scaleX(0.93);transform-origin:right center;">10,135.53 €</div>
<svg style="position:absolute;left:49.20px;top:268.36px;overflow:visible;" width="8.2" height="8.2" viewBox="0 0 8.2 8.2"><rect x="0.55" y="0.55" width="7.1" height="7.1" rx="1.6" fill="#fff" stroke="#8f8f8f" stroke-width="1.05"/></svg>
<div style="position:absolute;left:72.00px;top:268.46px;line-height:10.4px;font-size:8.0px;font-weight:400;color:#4f4f4f;white-space:nowrap;transform:scaleX(0.93);transform-origin:left center;">1.4</div>
<div style="position:absolute;left:132.60px;top:268.46px;line-height:10.4px;font-size:8.0px;font-weight:400;color:#4f4f4f;white-space:nowrap;transform:scaleX(0.93);transform-origin:left center;">Engineering Fees</div>
<div style="position:absolute;left:306.40px;top:267.56px;width:24.60px;height:12.80px;background:#fff;border:0.8px solid #e6e6e6;border-radius:2px;box-sizing:border-box;"></div>
<svg style="position:absolute;left:313.50px;top:270.26px;overflow:visible;" width="10" height="7.8" viewBox="0 0 10 7.8"><path d="M0.6 7 V1 Q0.6 0.5 1.1 0.5 H3.4 L4.2 1.5 H7.4 Q7.9 1.5 7.9 2 V3.2 M0.6 7 L2.1 3.4 H9.4 L7.9 7 Z" fill="none" stroke="#555" stroke-width="0.95" stroke-linejoin="round"/></svg>
<div style="position:absolute;left:335.4px;top:267.66px;width:33.70px;height:12px;overflow:hidden;"><div style="position:absolute;right:0;top:0;line-height:12px;font-size:8.0px;font-weight:400;color:#4f4f4f;white-space:nowrap;transform:scaleX(0.93);transform-origin:right center;">0.00 €</div></div>
<svg style="position:absolute;left:374.50px;top:265.18px;overflow:visible;" width="5" height="4" viewBox="0 0 5 4"><path d="M0.5 0.5 L4.5 3.5" stroke="#d0d0d0" stroke-width="1.3"/></svg>
<svg style="position:absolute;left:373.20px;top:278.74px;overflow:visible;" width="5" height="5" viewBox="0 0 5 5"><path d="M0 0 L4.6 4.8 H0 Z" fill="#b8b8b8"/></svg>
<div style="position:absolute;right:594.30px;top:268.46px;line-height:10.4px;font-size:8.0px;font-weight:400;color:#4f4f4f;white-space:nowrap;transform:scaleX(0.93);transform-origin:right center;">17,800.00 €</div>
<div style="position:absolute;right:533.10px;top:268.46px;line-height:10.4px;font-size:8.0px;font-weight:400;color:#3f9f7c;white-space:nowrap;transform:scaleX(0.93);transform-origin:right center;"><svg width="4.2" height="6.8" viewBox="0 0 4.2 6.8" style="vertical-align:-1.2px;margin-right:2.2px"><path d="M0.2 0.8 H2.1 V5" fill="none" stroke="#3f9f7c" stroke-width="1.1"/><path d="M0.5 4.2 L2.1 6.7 L3.7 4.2 Z" fill="#3f9f7c"/></svg>-1,913.50 €</div>
<svg style="position:absolute;left:49.20px;top:289.52px;overflow:visible;" width="8.2" height="8.2" viewBox="0 0 8.2 8.2"><rect x="0.55" y="0.55" width="7.1" height="7.1" rx="1.6" fill="#fff" stroke="#8f8f8f" stroke-width="1.05"/></svg>
<div style="position:absolute;left:72.00px;top:289.62px;line-height:10.4px;font-size:8.0px;font-weight:400;color:#4f4f4f;white-space:nowrap;transform:scaleX(0.93);transform-origin:left center;">1.5</div>
<div style="position:absolute;left:132.60px;top:289.62px;line-height:10.4px;font-size:8.0px;font-weight:400;color:#4f4f4f;white-space:nowrap;transform:scaleX(0.93);transform-origin:left center;">Insurance</div>
<div style="position:absolute;left:306.40px;top:288.72px;width:24.60px;height:12.80px;background:#fff;border:0.8px solid #e6e6e6;border-radius:2px;box-sizing:border-box;"></div>
<svg style="position:absolute;left:313.50px;top:291.42px;overflow:visible;" width="10" height="7.8" viewBox="0 0 10 7.8"><path d="M0.6 7 V1 Q0.6 0.5 1.1 0.5 H3.4 L4.2 1.5 H7.4 Q7.9 1.5 7.9 2 V3.2 M0.6 7 L2.1 3.4 H9.4 L7.9 7 Z" fill="none" stroke="#555" stroke-width="0.95" stroke-linejoin="round"/></svg>
<div style="position:absolute;left:335.4px;top:288.82px;width:33.70px;height:12px;overflow:hidden;"><div style="position:absolute;right:0;top:0;line-height:12px;font-size:8.0px;font-weight:400;color:#4f4f4f;white-space:nowrap;transform:scaleX(0.93);transform-origin:right center;">0.00 €</div></div>
<svg style="position:absolute;left:374.50px;top:286.34px;overflow:visible;" width="5" height="4" viewBox="0 0 5 4"><path d="M0.5 0.5 L4.5 3.5" stroke="#d0d0d0" stroke-width="1.3"/></svg>
<svg style="position:absolute;left:373.20px;top:299.90px;overflow:visible;" width="5" height="5" viewBox="0 0 5 5"><path d="M0 0 L4.6 4.8 H0 Z" fill="#b8b8b8"/></svg>
<div style="position:absolute;right:594.30px;top:289.62px;line-height:10.4px;font-size:8.0px;font-weight:400;color:#4f4f4f;white-space:nowrap;transform:scaleX(0.93);transform-origin:right center;">10,000.00 €</div>
<div style="position:absolute;right:533.10px;top:289.62px;line-height:10.4px;font-size:8.0px;font-weight:400;color:#3f9f7c;white-space:nowrap;transform:scaleX(0.93);transform-origin:right center;"><svg width="4.2" height="6.8" viewBox="0 0 4.2 6.8" style="vertical-align:-1.2px;margin-right:2.2px"><path d="M0.2 0.8 H2.1 V5" fill="none" stroke="#3f9f7c" stroke-width="1.1"/><path d="M0.5 4.2 L2.1 6.7 L3.7 4.2 Z" fill="#3f9f7c"/></svg>-3,539.77 €</div>
<svg style="position:absolute;left:49.20px;top:310.68px;overflow:visible;" width="8.2" height="8.2" viewBox="0 0 8.2 8.2"><rect x="0.55" y="0.55" width="7.1" height="7.1" rx="1.6" fill="#fff" stroke="#8f8f8f" stroke-width="1.05"/></svg>
<div style="position:absolute;left:72.00px;top:310.78px;line-height:10.4px;font-size:8.0px;font-weight:400;color:#4f4f4f;white-space:nowrap;transform:scaleX(0.93);transform-origin:left center;">1.6</div>
<div style="position:absolute;left:132.60px;top:310.78px;line-height:10.4px;font-size:8.0px;font-weight:400;color:#4f4f4f;white-space:nowrap;transform:scaleX(0.93);transform-origin:left center;">Enter Additional Items</div>
<div style="position:absolute;left:306.40px;top:309.88px;width:24.60px;height:12.80px;background:#fff;border:0.8px solid #e6e6e6;border-radius:2px;box-sizing:border-box;"></div>
<svg style="position:absolute;left:313.50px;top:312.58px;overflow:visible;" width="10" height="7.8" viewBox="0 0 10 7.8"><path d="M0.6 7 V1 Q0.6 0.5 1.1 0.5 H3.4 L4.2 1.5 H7.4 Q7.9 1.5 7.9 2 V3.2 M0.6 7 L2.1 3.4 H9.4 L7.9 7 Z" fill="none" stroke="#555" stroke-width="0.95" stroke-linejoin="round"/></svg>
<div style="position:absolute;left:335.4px;top:309.98px;width:33.70px;height:12px;overflow:hidden;"><div style="position:absolute;right:0;top:0;line-height:12px;font-size:8.0px;font-weight:400;color:#4f4f4f;white-space:nowrap;transform:scaleX(0.93);transform-origin:right center;">4,673.01 €</div></div>
<svg style="position:absolute;left:374.50px;top:307.50px;overflow:visible;" width="5" height="4" viewBox="0 0 5 4"><path d="M0.5 0.5 L4.5 3.5" stroke="#d0d0d0" stroke-width="1.3"/></svg>
<svg style="position:absolute;left:373.20px;top:321.06px;overflow:visible;" width="5" height="5" viewBox="0 0 5 5"><path d="M0 0 L4.6 4.8 H0 Z" fill="#b8b8b8"/></svg>
<div style="position:absolute;right:594.30px;top:310.78px;line-height:10.4px;font-size:8.0px;font-weight:400;color:#4f4f4f;white-space:nowrap;transform:scaleX(0.93);transform-origin:right center;">14,673.01 €</div>
<div style="position:absolute;right:533.10px;top:310.78px;line-height:10.4px;font-size:8.0px;font-weight:400;color:#4f4f4f;white-space:nowrap;transform:scaleX(0.93);transform-origin:right center;">0.00 €</div>
<svg style="position:absolute;left:49.20px;top:331.84px;overflow:visible;" width="8.2" height="8.2" viewBox="0 0 8.2 8.2"><rect x="0.55" y="0.55" width="7.1" height="7.1" rx="1.6" fill="#fff" stroke="#8f8f8f" stroke-width="1.05"/></svg>
<svg style="position:absolute;left:63.40px;top:332.94px;overflow:visible;" width="6.5" height="6.4" viewBox="0 0 6.5 6.4"><rect x="0" y="0" width="6.5" height="6.4" rx="1" fill="#8a8a8a"/><rect x="1.4" y="2.8" width="3.7" height="0.9" fill="#d8d8d8"/></svg>
<div style="position:absolute;left:71.00px;top:331.94px;line-height:10.4px;font-size:8.0px;font-weight:700;color:#3d3d3d;white-space:nowrap;transform:scaleX(0.92);transform-origin:left center;">2</div>
<div style="position:absolute;left:124.30px;top:332.07px;line-height:10.14px;font-size:7.8px;font-weight:700;color:#474747;white-space:nowrap;transform:scaleX(0.888);transform-origin:left center;">ON-SITE WORKS</div>
<div style="position:absolute;left:335.4px;top:331.14px;width:33.70px;height:12px;overflow:hidden;"><div style="position:absolute;right:0;top:0;line-height:12px;font-size:8.0px;font-weight:700;color:#3d3d3d;white-space:nowrap;transform:scaleX(0.92);transform-origin:right center;">1,375.36 €</div></div>
<div style="position:absolute;right:594.30px;top:331.94px;line-height:10.4px;font-size:8.0px;font-weight:700;color:#e2403a;white-space:nowrap;transform:scaleX(0.92);transform-origin:right center;">803,362.21 €</div>
<div style="position:absolute;right:533.10px;top:331.94px;line-height:10.4px;font-size:8.0px;font-weight:700;color:#e2403a;white-space:nowrap;transform:scaleX(0.92);transform-origin:right center;"><svg width="4.2" height="6.8" viewBox="0 0 4.2 6.8" style="vertical-align:-1.2px;margin-right:2.2px"><path d="M0.2 6 H2.1 V1.8" fill="none" stroke="#e2403a" stroke-width="1.1"/><path d="M0.5 2.6 L2.1 0.1 L3.7 2.6 Z" fill="#e2403a"/></svg>2,535.34 €</div>
<div style="position:absolute;right:479.60px;top:331.94px;line-height:10.4px;font-size:8.0px;font-weight:700;color:#3d3d3d;white-space:nowrap;transform:scaleX(0.92);transform-origin:right center;">101,078.79 €</div>
<svg style="position:absolute;left:49.20px;top:353.00px;overflow:visible;" width="8.2" height="8.2" viewBox="0 0 8.2 8.2"><rect x="0.55" y="0.55" width="7.1" height="7.1" rx="1.6" fill="#fff" stroke="#8f8f8f" stroke-width="1.05"/></svg>
<svg style="position:absolute;left:72.20px;top:354.10px;overflow:visible;" width="6.5" height="6.4" viewBox="0 0 6.5 6.4"><rect x="0" y="0" width="6.5" height="6.4" rx="1" fill="#8a8a8a"/><rect x="1.4" y="2.8" width="3.7" height="0.9" fill="#d8d8d8"/></svg>
<div style="position:absolute;left:80.00px;top:353.10px;line-height:10.4px;font-size:8.0px;font-weight:700;color:#3d3d3d;white-space:nowrap;transform:scaleX(0.92);transform-origin:left center;">2.1</div>
<div style="position:absolute;left:132.50px;top:353.23px;line-height:10.14px;font-size:7.8px;font-weight:700;color:#474747;white-space:nowrap;transform:scaleX(0.888);transform-origin:left center;">SITE PREP</div>
<div style="position:absolute;left:335.4px;top:352.30px;width:33.70px;height:12px;overflow:hidden;"><div style="position:absolute;right:0;top:0;line-height:12px;font-size:8.0px;font-weight:700;color:#3d3d3d;white-space:nowrap;transform:scaleX(0.92);transform-origin:right center;">3,116.18 €</div></div>
<div style="position:absolute;right:594.30px;top:353.10px;line-height:10.4px;font-size:8.0px;font-weight:700;color:#3d3d3d;white-space:nowrap;transform:scaleX(0.92);transform-origin:right center;">193,116.18 €</div>
<div style="position:absolute;right:533.10px;top:353.10px;line-height:10.4px;font-size:8.0px;font-weight:700;color:#3f9f7c;white-space:nowrap;transform:scaleX(0.92);transform-origin:right center;"><svg width="4.2" height="6.8" viewBox="0 0 4.2 6.8" style="vertical-align:-1.2px;margin-right:2.2px"><path d="M0.2 0.8 H2.1 V5" fill="none" stroke="#3f9f7c" stroke-width="1.1"/><path d="M0.5 4.2 L2.1 6.7 L3.7 4.2 Z" fill="#3f9f7c"/></svg>-338.79 €</div>
<div style="position:absolute;right:479.60px;top:353.10px;line-height:10.4px;font-size:8.0px;font-weight:700;color:#3d3d3d;white-space:nowrap;transform:scaleX(0.92);transform-origin:right center;">19,091.94 €</div>
<svg style="position:absolute;left:49.20px;top:374.16px;overflow:visible;" width="8.2" height="8.2" viewBox="0 0 8.2 8.2"><rect x="0.55" y="0.55" width="7.1" height="7.1" rx="1.6" fill="#fff" stroke="#8f8f8f" stroke-width="1.05"/></svg>
<div style="position:absolute;left:80.40px;top:374.26px;line-height:10.4px;font-size:8.0px;font-weight:400;color:#4f4f4f;white-space:nowrap;transform:scaleX(0.93);transform-origin:left center;">2.1.1</div>
<div style="position:absolute;left:140.80px;top:374.26px;line-height:10.4px;font-size:8.0px;font-weight:400;color:#4f4f4f;white-space:nowrap;transform:scaleX(0.965);transform-origin:left center;">Demolition (Remodel)</div>
<div style="position:absolute;left:306.40px;top:373.36px;width:24.60px;height:12.80px;background:#fff;border:0.8px solid #e6e6e6;border-radius:2px;box-sizing:border-box;"></div>
<svg style="position:absolute;left:313.50px;top:376.06px;overflow:visible;" width="10" height="7.8" viewBox="0 0 10 7.8"><path d="M0.6 7 V1 Q0.6 0.5 1.1 0.5 H3.4 L4.2 1.5 H7.4 Q7.9 1.5 7.9 2 V3.2 M0.6 7 L2.1 3.4 H9.4 L7.9 7 Z" fill="none" stroke="#555" stroke-width="0.95" stroke-linejoin="round"/></svg>
<div style="position:absolute;left:335.4px;top:373.46px;width:33.70px;height:12px;overflow:hidden;"><div style="position:absolute;right:0;top:0;line-height:12px;font-size:8.0px;font-weight:400;color:#4f4f4f;white-space:nowrap;transform:scaleX(0.93);transform-origin:right center;">1,000.00 €</div></div>
<svg style="position:absolute;left:374.50px;top:370.98px;overflow:visible;" width="5" height="4" viewBox="0 0 5 4"><path d="M0.5 0.5 L4.5 3.5" stroke="#d0d0d0" stroke-width="1.3"/></svg>
<svg style="position:absolute;left:373.20px;top:384.54px;overflow:visible;" width="5" height="5" viewBox="0 0 5 5"><path d="M0 0 L4.6 4.8 H0 Z" fill="#3f9f7c"/></svg>
<div style="position:absolute;right:594.30px;top:374.26px;line-height:10.4px;font-size:8.0px;font-weight:400;color:#e2403a;white-space:nowrap;transform:scaleX(0.93);transform-origin:right center;">12,000.00 €</div>
<div style="position:absolute;right:533.10px;top:374.26px;line-height:10.4px;font-size:8.0px;font-weight:400;color:#e2403a;white-space:nowrap;transform:scaleX(0.93);transform-origin:right center;"><svg width="4.2" height="6.8" viewBox="0 0 4.2 6.8" style="vertical-align:-1.2px;margin-right:2.2px"><path d="M0.2 6 H2.1 V1.8" fill="none" stroke="#e2403a" stroke-width="1.1"/><path d="M0.5 2.6 L2.1 0.1 L3.7 2.6 Z" fill="#e2403a"/></svg>578.33 €</div>
<div style="position:absolute;right:479.60px;top:374.26px;line-height:10.4px;font-size:8.0px;font-weight:400;color:#4f4f4f;white-space:nowrap;transform:scaleX(0.93);transform-origin:right center;">2,231.14 €</div>
<svg style="position:absolute;left:49.20px;top:395.32px;overflow:visible;" width="8.2" height="8.2" viewBox="0 0 8.2 8.2"><rect x="0.55" y="0.55" width="7.1" height="7.1" rx="1.6" fill="#fff" stroke="#8f8f8f" stroke-width="1.05"/></svg>
<div style="position:absolute;left:80.40px;top:395.42px;line-height:10.4px;font-size:8.0px;font-weight:400;color:#4f4f4f;white-space:nowrap;transform:scaleX(0.93);transform-origin:left center;">2.1.2</div>
<div style="position:absolute;left:140.80px;top:395.42px;line-height:10.4px;font-size:8.0px;font-weight:400;color:#4f4f4f;white-space:nowrap;transform:scaleX(0.965);transform-origin:left center;">Dumpster &amp; Removal</div>
<div style="position:absolute;left:306.40px;top:394.52px;width:24.60px;height:12.80px;background:#fff;border:0.8px solid #e6e6e6;border-radius:2px;box-sizing:border-box;"></div>
<svg style="position:absolute;left:313.50px;top:397.22px;overflow:visible;" width="10" height="7.8" viewBox="0 0 10 7.8"><path d="M0.6 7 V1 Q0.6 0.5 1.1 0.5 H3.4 L4.2 1.5 H7.4 Q7.9 1.5 7.9 2 V3.2 M0.6 7 L2.1 3.4 H9.4 L7.9 7 Z" fill="none" stroke="#555" stroke-width="0.95" stroke-linejoin="round"/></svg>
<div style="position:absolute;left:335.4px;top:394.62px;width:33.70px;height:12px;overflow:hidden;"><div style="position:absolute;right:0;top:0;line-height:12px;font-size:8.0px;font-weight:400;color:#4f4f4f;white-space:nowrap;transform:scaleX(0.93);transform-origin:right center;">0.00 €</div></div>
<svg style="position:absolute;left:374.50px;top:392.14px;overflow:visible;" width="5" height="4" viewBox="0 0 5 4"><path d="M0.5 0.5 L4.5 3.5" stroke="#d0d0d0" stroke-width="1.3"/></svg>
<svg style="position:absolute;left:373.20px;top:405.70px;overflow:visible;" width="5" height="5" viewBox="0 0 5 5"><path d="M0 0 L4.6 4.8 H0 Z" fill="#b8b8b8"/></svg>
<div style="position:absolute;right:594.30px;top:395.42px;line-height:10.4px;font-size:8.0px;font-weight:400;color:#e2403a;white-space:nowrap;transform:scaleX(0.93);transform-origin:right center;"><svg width="2.6" height="6.2" viewBox="0 0 2.6 6.2" style="vertical-align:-0.1px;margin-right:2.0px"><path d="M0.2 0 H2.4 L2.1 4.1 H0.5 Z" fill="#e2403a"/><rect x="0.4" y="4.7" width="1.8" height="1.5" fill="#e2403a"/></svg>22,000.00 €</div>
<div style="position:absolute;right:533.10px;top:395.42px;line-height:10.4px;font-size:8.0px;font-weight:400;color:#e2403a;white-space:nowrap;transform:scaleX(0.93);transform-origin:right center;"><svg width="4.2" height="6.8" viewBox="0 0 4.2 6.8" style="vertical-align:-1.2px;margin-right:2.2px"><path d="M0.2 6 H2.1 V1.8" fill="none" stroke="#e2403a" stroke-width="1.1"/><path d="M0.5 2.6 L2.1 0.1 L3.7 2.6 Z" fill="#e2403a"/></svg>3,252.68 €</div>
<div style="position:absolute;right:479.60px;top:395.42px;line-height:10.4px;font-size:8.0px;font-weight:400;color:#4f4f4f;white-space:nowrap;transform:scaleX(0.93);transform-origin:right center;">13,093.66 €</div>
<svg style="position:absolute;left:49.20px;top:416.48px;overflow:visible;" width="8.2" height="8.2" viewBox="0 0 8.2 8.2"><rect x="0.55" y="0.55" width="7.1" height="7.1" rx="1.6" fill="#fff" stroke="#8f8f8f" stroke-width="1.05"/></svg>
<div style="position:absolute;left:80.40px;top:416.58px;line-height:10.4px;font-size:8.0px;font-weight:400;color:#4f4f4f;white-space:nowrap;transform:scaleX(0.93);transform-origin:left center;">2.1.3</div>
<div style="position:absolute;left:140.80px;top:416.58px;line-height:10.4px;font-size:8.0px;font-weight:400;color:#4f4f4f;white-space:nowrap;transform:scaleX(0.965);transform-origin:left center;">Clear Lot</div>
<div style="position:absolute;left:306.40px;top:415.68px;width:24.60px;height:12.80px;background:#fff;border:0.8px solid #e6e6e6;border-radius:2px;box-sizing:border-box;"></div>
<svg style="position:absolute;left:313.50px;top:418.38px;overflow:visible;" width="10" height="7.8" viewBox="0 0 10 7.8"><path d="M0.6 7 V1 Q0.6 0.5 1.1 0.5 H3.4 L4.2 1.5 H7.4 Q7.9 1.5 7.9 2 V3.2 M0.6 7 L2.1 3.4 H9.4 L7.9 7 Z" fill="none" stroke="#555" stroke-width="0.95" stroke-linejoin="round"/></svg>
<div style="position:absolute;left:335.4px;top:415.78px;width:33.70px;height:12px;overflow:hidden;"><div style="position:absolute;right:0;top:0;line-height:12px;font-size:8.0px;font-weight:400;color:#4f4f4f;white-space:nowrap;transform:scaleX(0.93);transform-origin:right center;">0.00 €</div></div>
<svg style="position:absolute;left:374.50px;top:413.30px;overflow:visible;" width="5" height="4" viewBox="0 0 5 4"><path d="M0.5 0.5 L4.5 3.5" stroke="#d0d0d0" stroke-width="1.3"/></svg>
<svg style="position:absolute;left:373.20px;top:426.86px;overflow:visible;" width="5" height="5" viewBox="0 0 5 5"><path d="M0 0 L4.6 4.8 H0 Z" fill="#b8b8b8"/></svg>
<div style="position:absolute;right:594.30px;top:416.58px;line-height:10.4px;font-size:8.0px;font-weight:400;color:#e2403a;white-space:nowrap;transform:scaleX(0.93);transform-origin:right center;"><svg width="2.6" height="6.2" viewBox="0 0 2.6 6.2" style="vertical-align:-0.1px;margin-right:2.0px"><path d="M0.2 0 H2.4 L2.1 4.1 H0.5 Z" fill="#e2403a"/><rect x="0.4" y="4.7" width="1.8" height="1.5" fill="#e2403a"/></svg>13,000.00 €</div>
<div style="position:absolute;right:533.10px;top:416.58px;line-height:10.4px;font-size:8.0px;font-weight:400;color:#e2403a;white-space:nowrap;transform:scaleX(0.93);transform-origin:right center;"><svg width="4.2" height="6.8" viewBox="0 0 4.2 6.8" style="vertical-align:-1.2px;margin-right:2.2px"><path d="M0.2 6 H2.1 V1.8" fill="none" stroke="#e2403a" stroke-width="1.1"/><path d="M0.5 2.6 L2.1 0.1 L3.7 2.6 Z" fill="#e2403a"/></svg>1,267.19 €</div>
<div style="position:absolute;right:479.60px;top:416.58px;line-height:10.4px;font-size:8.0px;font-weight:400;color:#4f4f4f;white-space:nowrap;transform:scaleX(0.93);transform-origin:right center;">3,767.14 €</div>
<svg style="position:absolute;left:49.20px;top:437.64px;overflow:visible;" width="8.2" height="8.2" viewBox="0 0 8.2 8.2"><rect x="0.55" y="0.55" width="7.1" height="7.1" rx="1.6" fill="#fff" stroke="#8f8f8f" stroke-width="1.05"/></svg>
<div style="position:absolute;left:80.40px;top:437.74px;line-height:10.4px;font-size:8.0px;font-weight:400;color:#4f4f4f;white-space:nowrap;transform:scaleX(0.93);transform-origin:left center;">2.1.4</div>
<div style="position:absolute;left:140.80px;top:437.74px;line-height:10.4px;font-size:8.0px;font-weight:400;color:#4f4f4f;white-space:nowrap;transform:scaleX(0.965);transform-origin:left center;">Storage On Site</div>
<div style="position:absolute;left:306.40px;top:436.84px;width:24.60px;height:12.80px;background:#fff;border:0.8px solid #e6e6e6;border-radius:2px;box-sizing:border-box;"></div>
<svg style="position:absolute;left:313.50px;top:439.54px;overflow:visible;" width="10" height="7.8" viewBox="0 0 10 7.8"><path d="M0.6 7 V1 Q0.6 0.5 1.1 0.5 H3.4 L4.2 1.5 H7.4 Q7.9 1.5 7.9 2 V3.2 M0.6 7 L2.1 3.4 H9.4 L7.9 7 Z" fill="none" stroke="#555" stroke-width="0.95" stroke-linejoin="round"/></svg>
<div style="position:absolute;left:335.4px;top:436.94px;width:33.70px;height:12px;overflow:hidden;"><div style="position:absolute;right:0;top:0;line-height:12px;font-size:8.0px;font-weight:400;color:#4f4f4f;white-space:nowrap;transform:scaleX(0.93);transform-origin:right center;">0.00 €</div></div>
<svg style="position:absolute;left:374.50px;top:434.46px;overflow:visible;" width="5" height="4" viewBox="0 0 5 4"><path d="M0.5 0.5 L4.5 3.5" stroke="#d0d0d0" stroke-width="1.3"/></svg>
<svg style="position:absolute;left:373.20px;top:448.02px;overflow:visible;" width="5" height="5" viewBox="0 0 5 5"><path d="M0 0 L4.6 4.8 H0 Z" fill="#b8b8b8"/></svg>
<div style="position:absolute;right:594.30px;top:437.74px;line-height:10.4px;font-size:8.0px;font-weight:400;color:#4f4f4f;white-space:nowrap;transform:scaleX(0.93);transform-origin:right center;">14,000.00 €</div>
<div style="position:absolute;right:533.10px;top:437.74px;line-height:10.4px;font-size:8.0px;font-weight:400;color:#3f9f7c;white-space:nowrap;transform:scaleX(0.93);transform-origin:right center;"><svg width="4.2" height="6.8" viewBox="0 0 4.2 6.8" style="vertical-align:-1.2px;margin-right:2.2px"><path d="M0.2 0.8 H2.1 V5" fill="none" stroke="#3f9f7c" stroke-width="1.1"/><path d="M0.5 4.2 L2.1 6.7 L3.7 4.2 Z" fill="#3f9f7c"/></svg>-2,850.51 €</div>
<div style="position:absolute;right:725.50px;top:460.80px;line-height:10.4px;font-size:8.0px;font-weight:700;color:#3d3d3d;white-space:nowrap;transform:scaleX(0.92);transform-origin:right center;">Total</div>
<div style="position:absolute;left:335.4px;top:460.00px;width:33.70px;height:12px;overflow:hidden;"><div style="position:absolute;right:0;top:0;line-height:12px;font-size:8.0px;font-weight:700;color:#3d3d3d;white-space:nowrap;transform:scaleX(0.92);transform-origin:right center;">30,455.20 €</div></div>
<div style="position:absolute;right:594.30px;top:460.80px;line-height:10.4px;font-size:8.0px;font-weight:700;color:#3d3d3d;white-space:nowrap;transform:scaleX(0.92);transform-origin:right center;">6,636,242.05 €</div>
<div style="position:absolute;right:533.10px;top:460.80px;line-height:10.4px;font-size:8.0px;font-weight:700;color:#3d3d3d;white-space:nowrap;transform:scaleX(0.92);transform-origin:right center;">-4,166.51 €</div>
<div style="position:absolute;right:479.60px;top:460.80px;line-height:10.4px;font-size:8.0px;font-weight:700;color:#3d3d3d;white-space:nowrap;transform:scaleX(0.92);transform-origin:right center;">2,995,220.8...</div>
<div style="position:absolute;left:570.30px;top:162.60px;width:412.10px;height:50.90px;background:#617a87;"></div>
<div style="position:absolute;left:570.30px;top:162.60px;width:2.20px;height:50.90px;background:#c9d2d6;"></div>
<div style="position:absolute;left:662.60px;top:162.60px;width:1.60px;height:50.90px;background:#92a3ab;"></div>
<div style="position:absolute;left:767.40px;top:162.60px;width:1.60px;height:50.90px;background:#92a3ab;"></div>
<div style="position:absolute;left:871.50px;top:162.60px;width:1.60px;height:50.90px;background:#92a3ab;"></div>
<div style="position:absolute;left:976.00px;top:162.60px;width:1.60px;height:50.90px;background:#92a3ab;"></div>
<div style="position:absolute;left:664.20px;top:213.50px;width:103.20px;height:518.00px;background:#fbfbfb;"></div>
<div style="position:absolute;left:570.30px;top:251.50px;width:412.10px;height:1.20px;background:#e8e8e8;"></div>
<div style="position:absolute;left:570.30px;top:288.50px;width:412.10px;height:1.20px;background:#e8e8e8;"></div>
<div style="position:absolute;left:570.30px;top:324.50px;width:412.10px;height:1.20px;background:#e8e8e8;"></div>
<div style="position:absolute;left:570.30px;top:361.50px;width:412.10px;height:1.20px;background:#e8e8e8;"></div>
<div style="position:absolute;left:570.30px;top:397.50px;width:412.10px;height:1.20px;background:#e8e8e8;"></div>
<div style="position:absolute;left:570.30px;top:434.50px;width:412.10px;height:1.20px;background:#e8e8e8;"></div>
<div style="position:absolute;left:570.30px;top:470.50px;width:412.10px;height:1.20px;background:#e8e8e8;"></div>
<div style="position:absolute;left:570.30px;top:507.50px;width:412.10px;height:1.20px;background:#e8e8e8;"></div>
<div style="position:absolute;left:570.30px;top:543.50px;width:412.10px;height:1.20px;background:#e8e8e8;"></div>
<div style="position:absolute;left:570.30px;top:580.50px;width:412.10px;height:1.20px;background:#e8e8e8;"></div>
<div style="position:absolute;left:570.30px;top:617.50px;width:412.10px;height:1.20px;background:#e8e8e8;"></div>
<div style="position:absolute;left:570.30px;top:653.50px;width:412.10px;height:1.20px;background:#e8e8e8;"></div>
<div style="position:absolute;left:570.30px;top:690.50px;width:412.10px;height:1.20px;background:#e8e8e8;"></div>
<div style="position:absolute;left:570.30px;top:696.00px;width:412.10px;height:1.40px;background:#e3e3e3;"></div>
<div style="position:absolute;left:570.30px;top:731.20px;width:412.10px;height:1.20px;background:#ececec;"></div>
<div style="position:absolute;left:570.30px;top:735.40px;width:412.10px;height:1.20px;background:#ececec;"></div>
<div style="position:absolute;left:662.40px;top:213.50px;width:1.30px;height:518.50px;background:#e6e6e6;"></div>
<div style="position:absolute;left:767.40px;top:213.50px;width:1.30px;height:518.50px;background:#e6e6e6;"></div>
<div style="position:absolute;left:871.40px;top:213.50px;width:1.30px;height:518.50px;background:#e6e6e6;"></div>
<div style="position:absolute;left:976.40px;top:213.50px;width:1.30px;height:518.50px;background:#e6e6e6;"></div>
<div style="position:absolute;left:570.30px;top:213.50px;width:1.40px;height:526.50px;background:#e6e6e6;"></div>
<div style="position:absolute;left:570.00px;top:739.90px;width:412.40px;height:8.30px;background:#bdbdbd;border-radius:0 0 5px 5px;"></div>
<div style="position:absolute;right:366.60px;top:169.05px;line-height:16.51px;font-size:12.7px;font-weight:400;color:#f4f6f7;white-space:nowrap;">Accrual</div>
<div style="position:absolute;right:261.80px;top:169.05px;line-height:16.51px;font-size:12.7px;font-weight:400;color:#f4f6f7;white-space:nowrap;">Complete %</div>
<div style="position:absolute;right:261.80px;top:192.25px;line-height:16.51px;font-size:12.7px;font-weight:400;color:#f4f6f7;white-space:nowrap;">(calculated)</div>
<div style="position:absolute;right:157.80px;top:169.05px;line-height:16.51px;font-size:12.7px;font-weight:400;color:#f4f6f7;white-space:nowrap;">Advance</div>
<div style="position:absolute;right:157.80px;top:192.25px;line-height:16.51px;font-size:12.7px;font-weight:400;color:#f4f6f7;white-space:nowrap;">payment</div>
<div style="position:absolute;right:52.90px;top:169.05px;line-height:16.51px;font-size:12.7px;font-weight:400;color:#f4f6f7;white-space:nowrap;">Actual cost</div>
<div style="position:absolute;right:366.60px;top:224.69px;line-height:16.51px;font-size:12.7px;font-weight:700;color:#4d4d4d;white-space:nowrap;">-15,520.46 €</div>
<div style="position:absolute;right:261.80px;top:224.69px;line-height:16.51px;font-size:12.7px;font-weight:700;color:#4d4d4d;white-space:nowrap;">66.09%</div>
<div style="position:absolute;right:157.80px;top:224.69px;line-height:16.51px;font-size:12.7px;font-weight:700;color:#4d4d4d;white-space:nowrap;">0.00 €</div>
<div style="position:absolute;right:52.90px;top:224.69px;line-height:16.51px;font-size:12.7px;font-weight:700;color:#3b70b5;white-space:nowrap;text-decoration:underline;text-underline-offset:1.2px;">52,520.46 €</div>
<div style="position:absolute;right:366.60px;top:261.22px;line-height:16.51px;font-size:12.7px;font-weight:400;color:#595959;white-space:nowrap;">6,454.41 €</div>
<div style="position:absolute;right:261.80px;top:261.22px;line-height:16.51px;font-size:12.7px;font-weight:400;color:#595959;white-space:nowrap;">56.97%</div>
<div style="position:absolute;right:52.90px;top:261.22px;line-height:16.51px;font-size:12.7px;font-weight:400;color:#3b70b5;white-space:nowrap;text-decoration:underline;text-underline-offset:1.2px;">8,545.59 €</div>
<div style="position:absolute;right:366.60px;top:297.77px;line-height:16.51px;font-size:12.7px;font-weight:400;color:#595959;white-space:nowrap;">848.69 €</div>
<div style="position:absolute;right:261.80px;top:297.77px;line-height:16.51px;font-size:12.7px;font-weight:400;color:#595959;white-space:nowrap;">87.88%</div>
<div style="position:absolute;right:52.90px;top:297.77px;line-height:16.51px;font-size:12.7px;font-weight:400;color:#3b70b5;white-space:nowrap;text-decoration:underline;text-underline-offset:1.2px;">6,151.31 €</div>
<div style="position:absolute;right:366.60px;top:334.32px;line-height:16.51px;font-size:12.7px;font-weight:400;color:#595959;white-space:nowrap;">10,135.53 €</div>
<div style="position:absolute;right:261.80px;top:334.32px;line-height:16.51px;font-size:12.7px;font-weight:400;color:#595959;white-space:nowrap;">32.43%</div>
<div style="position:absolute;right:52.90px;top:334.32px;line-height:16.51px;font-size:12.7px;font-weight:400;color:#3b70b5;white-space:nowrap;text-decoration:underline;text-underline-offset:1.2px;">4,864.47 €</div>
<div style="position:absolute;right:261.80px;top:370.87px;line-height:16.51px;font-size:12.7px;font-weight:400;color:#595959;white-space:nowrap;">80.34%</div>
<div style="position:absolute;right:52.90px;top:370.87px;line-height:16.51px;font-size:12.7px;font-weight:400;color:#3b70b5;white-space:nowrap;text-decoration:underline;text-underline-offset:1.2px;">14,300.35 €</div>
<div style="position:absolute;right:261.80px;top:407.42px;line-height:16.51px;font-size:12.7px;font-weight:400;color:#595959;white-space:nowrap;">81.74%</div>
<div style="position:absolute;right:52.90px;top:407.42px;line-height:16.51px;font-size:12.7px;font-weight:400;color:#3b70b5;white-space:nowrap;text-decoration:underline;text-underline-offset:1.2px;">8,173.56 €</div>
<div style="position:absolute;right:261.80px;top:443.97px;line-height:16.51px;font-size:12.7px;font-weight:400;color:#595959;white-space:nowrap;">71.46%</div>
<div style="position:absolute;right:52.90px;top:443.97px;line-height:16.51px;font-size:12.7px;font-weight:400;color:#3b70b5;white-space:nowrap;text-decoration:underline;text-underline-offset:1.2px;">10,485.18 €</div>
<div style="position:absolute;right:366.60px;top:480.52px;line-height:16.51px;font-size:12.7px;font-weight:700;color:#4d4d4d;white-space:nowrap;">101,078.79 €</div>
<div style="position:absolute;right:261.80px;top:480.52px;line-height:16.51px;font-size:12.7px;font-weight:700;color:#4d4d4d;white-space:nowrap;">5.42%</div>
<div style="position:absolute;right:157.80px;top:480.52px;line-height:16.51px;font-size:12.7px;font-weight:700;color:#4d4d4d;white-space:nowrap;">0.00 €</div>
<div style="position:absolute;right:52.90px;top:480.52px;line-height:16.51px;font-size:12.7px;font-weight:700;color:#3b70b5;white-space:nowrap;text-decoration:underline;text-underline-offset:1.2px;">41,908.06 €</div>
<div style="position:absolute;right:366.60px;top:517.07px;line-height:16.51px;font-size:12.7px;font-weight:700;color:#4d4d4d;white-space:nowrap;">19,091.94 €</div>
<div style="position:absolute;right:261.80px;top:517.07px;line-height:16.51px;font-size:12.7px;font-weight:700;color:#4d4d4d;white-space:nowrap;">14.79%</div>
<div style="position:absolute;right:157.80px;top:517.07px;line-height:16.51px;font-size:12.7px;font-weight:700;color:#4d4d4d;white-space:nowrap;">0.00 €</div>
<div style="position:absolute;right:52.90px;top:517.07px;line-height:16.51px;font-size:12.7px;font-weight:700;color:#3b70b5;white-space:nowrap;text-decoration:underline;text-underline-offset:1.2px;">26,908.06 €</div>
<div style="position:absolute;right:366.60px;top:553.62px;line-height:16.51px;font-size:12.7px;font-weight:400;color:#595959;white-space:nowrap;">2,231.14 €</div>
<div style="position:absolute;right:261.80px;top:553.62px;line-height:16.51px;font-size:12.7px;font-weight:400;color:#595959;white-space:nowrap;">74.32%</div>
<div style="position:absolute;right:52.90px;top:553.62px;line-height:16.51px;font-size:12.7px;font-weight:400;color:#3b70b5;white-space:nowrap;text-decoration:underline;text-underline-offset:1.2px;">8,768.86 €</div>
<div style="position:absolute;right:366.60px;top:590.17px;line-height:16.51px;font-size:12.7px;font-weight:400;color:#595959;white-space:nowrap;">13,093.66 €</div>
<div style="position:absolute;right:261.80px;top:590.17px;line-height:16.51px;font-size:12.7px;font-weight:400;color:#595959;white-space:nowrap;">47.30%</div>
<div style="position:absolute;right:52.90px;top:590.17px;line-height:16.51px;font-size:12.7px;font-weight:400;color:#3b70b5;white-space:nowrap;text-decoration:underline;text-underline-offset:1.2px;">8,906.34 €</div>
<div style="position:absolute;right:366.60px;top:626.72px;line-height:16.51px;font-size:12.7px;font-weight:400;color:#595959;white-space:nowrap;">3,767.14 €</div>
<div style="position:absolute;right:261.80px;top:626.72px;line-height:16.51px;font-size:12.7px;font-weight:400;color:#595959;white-space:nowrap;">71.02%</div>
<div style="position:absolute;right:52.90px;top:626.72px;line-height:16.51px;font-size:12.7px;font-weight:400;color:#2d5288;white-space:nowrap;text-decoration:underline;text-underline-offset:1.2px;">9,232.86 €</div>
<div style="position:absolute;left:905px;top:655px;width:77.4px;height:32px;overflow:hidden;"><div style="position:absolute;left:8px;top:5px;width:80px;height:21.4px;background:#e1e1e1;border-radius:3px;box-shadow:0 1px 3px rgba(0,0,0,0.2);"></div><div style="position:absolute;left:15.3px;top:7.5px;line-height:16px;font-size:12.6px;color:#4a4a4a;white-space:nowrap;">9,232.86 €</div></div>
<div style="position:absolute;right:366.60px;top:703.54px;line-height:16.51px;font-size:12.7px;font-weight:700;color:#4a4a4a;white-space:nowrap;">2,995,220.8...</div>
<div style="position:absolute;right:157.80px;top:703.54px;line-height:16.51px;font-size:12.7px;font-weight:700;color:#4a4a4a;white-space:nowrap;">0.00 €</div>
<div style="position:absolute;right:52.90px;top:703.54px;line-height:16.51px;font-size:12.7px;font-weight:700;color:#4a4a4a;white-space:nowrap;">94,428.52 €</div>
<svg style="position:absolute;left:649.00px;top:187.00px;overflow:visible;" width="12.0" height="17.0" viewBox="0 0 12 17"><path d="M0.8 0.8 L0.9 12.4 L4 11.4 L7.6 16.6 L10.6 15 L8.4 10.2 L11.6 7.6 Z" fill="#000" stroke="#fff" stroke-width="0.8" stroke-linejoin="round"/></svg>
<svg style="position:absolute;left:655.00px;top:186.50px;overflow:visible;" width="15" height="8" viewBox="0 0 15 8"><path d="M0.5 0.8 H7.5 M4.5 3.8 H11.5 M8 6.8 H14.5" stroke="#c9d2d6" stroke-width="1.1"/></svg>
<svg style="position:absolute;left:540.50px;top:161.60px;overflow:visible;" width="7.199999999999999" height="10.2" viewBox="0 0 12 17"><path d="M0.8 0.8 L0.9 12.4 L4 11.4 L7.6 16.6 L10.6 15 L8.4 10.2 L11.6 7.6 Z" fill="#000" stroke="#fff" stroke-width="0.8" stroke-linejoin="round"/></svg>
</body></html>
